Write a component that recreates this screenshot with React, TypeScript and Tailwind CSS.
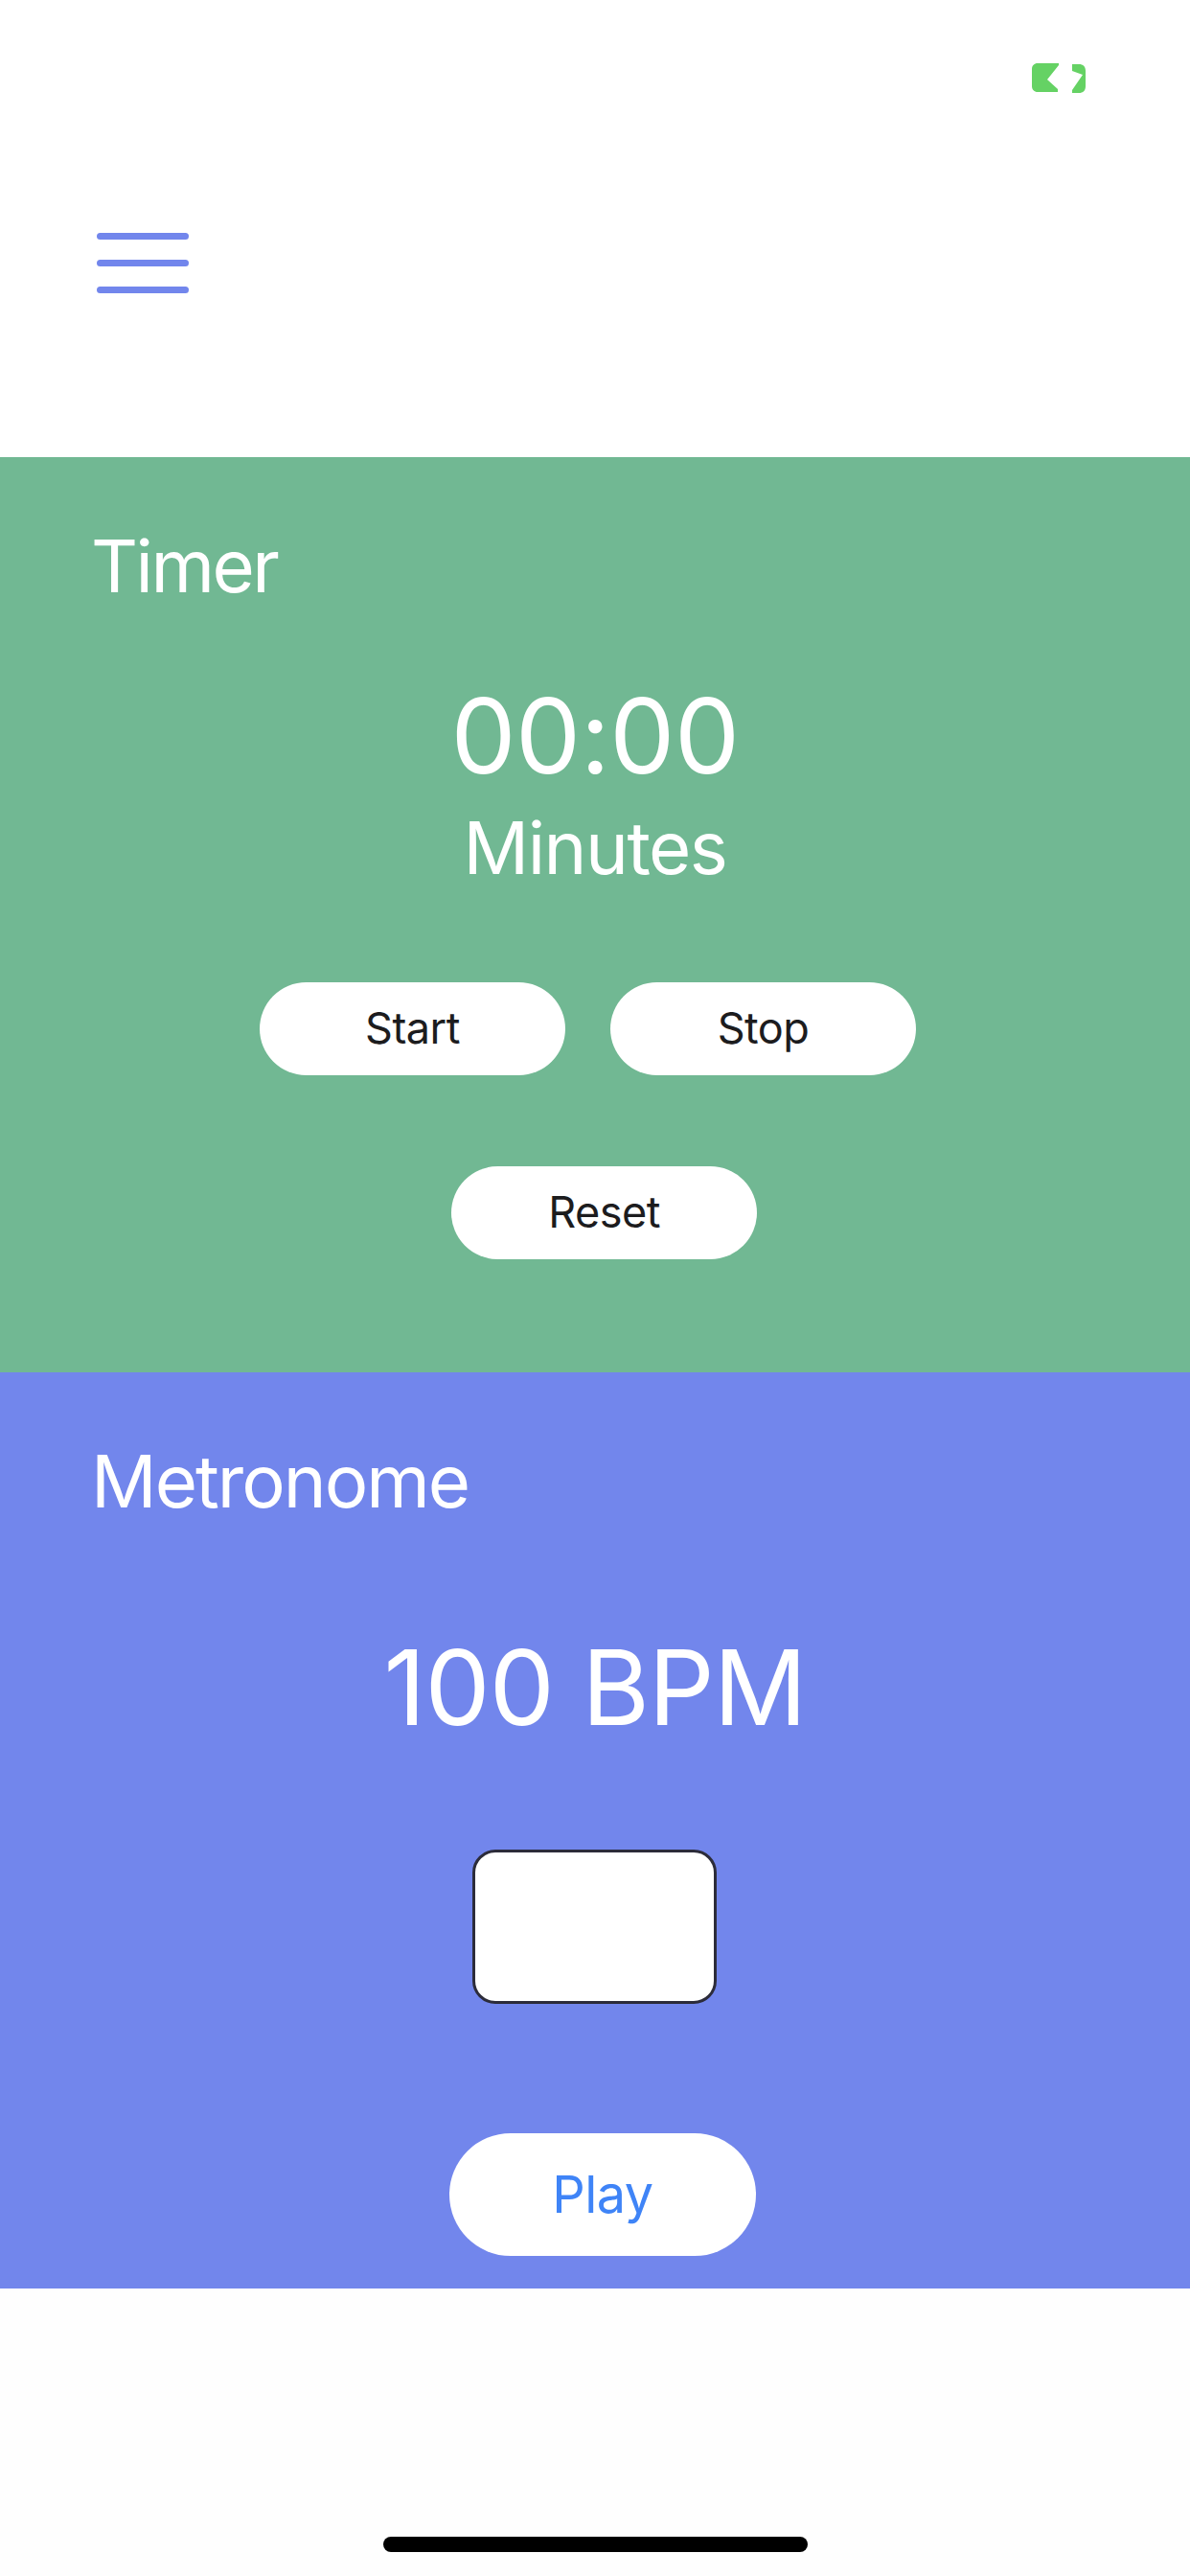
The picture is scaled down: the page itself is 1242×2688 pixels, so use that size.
import React from 'react'

const PillButton: React.FC<{ label: string; className?: string }> = ({ label, className = '' }) => (
  <button className={`w-[319px] h-[97px] pb-[3px] rounded-full bg-white flex items-center justify-center text-[45px] leading-none tracking-[-0.5px] text-[#1c1c1e] ${className}`}>
    {label}
  </button>
)

export default function App() {
  return (
    <div className="relative w-[1242px] h-[2688px] bg-[#fefefe] flex flex-col font-['Inter','Liberation_Sans',sans-serif]">
      {/* status bar + menu */}
      <header className="h-[477px] bg-white flex flex-col">
        <div className="flex justify-end pt-[66px] pr-[109px]">
          <svg width="56" height="31" viewBox="0 0 56 31" fill="#65d264" className="blur-[0.6px]">
            <path d="M6 0H28V2L16 17L27 27V30H6C2.500 30 0 27.500 0 24V6C0 2.500 2.500 0 6 0Z" />
            <path d="M42 1H49C53.500 1 56 3.500 56 8V24C56 28.500 53.500 31 49 31H42V28L53 12L42 8Z" />
          </svg>
        </div>
        <button className="mt-[146px] ml-[101px] w-[96px] flex flex-col gap-[21px] blur-[0.6px]">
          <span className="block h-[7px] rounded-full bg-[#7286ec]" />
          <span className="block h-[7px] rounded-full bg-[#7286ec]" />
          <span className="block h-[7px] rounded-full bg-[#7286ec]" />
        </button>
      </header>

      {/* timer */}
      <section className="h-[955px] bg-[#71b893] flex flex-col text-white">
        <h2 className="mt-[66px] ml-[95px] text-[76px] leading-[94px] font-normal tracking-[-2.500px]">Timer</h2>
        <div className="mt-[66px] text-center text-[108px] leading-[130px] font-normal tracking-[-0.5px]">00:00</div>
        <div className="mt-[4px] text-center text-[76px] leading-[94px] font-normal tracking-[-1.500px]">Minutes</div>
        <div className="mt-[94px] ml-[271px] flex gap-[47px]">
          <PillButton label="Start" />
          <PillButton label="Stop" />
        </div>
        <PillButton label="Reset" className="mt-[95px] ml-[471px]" />
      </section>

      {/* metronome */}
      <section className="h-[956px] bg-[#7286ec] flex flex-col text-white">
        <h2 className="mt-[66px] ml-[95px] text-[76px] leading-[94px] font-normal tracking-[-2px]">Metronome</h2>
        <div className="mt-[104px] text-center text-[108px] leading-[130px] font-normal tracking-[-1px]">100 BPM</div>
        <div className="mt-[104px] ml-[493px] w-[255px] h-[161px] rounded-[24px] border-[3px] border-[#2c2c3a] bg-white" />
        <button className="mt-[135px] ml-[469px] w-[320px] h-[128px] rounded-full bg-white text-[54px] leading-none tracking-[-0.5px] text-[#3f84f7]">
          Play
        </button>
      </section>

      {/* home indicator */}
      <div className="flex-1 flex flex-col items-center">
        <div className="mt-[259px] ml-[1px] w-[443px] h-[16px] rounded-full bg-black" />
      </div>
    </div>
  )
}
